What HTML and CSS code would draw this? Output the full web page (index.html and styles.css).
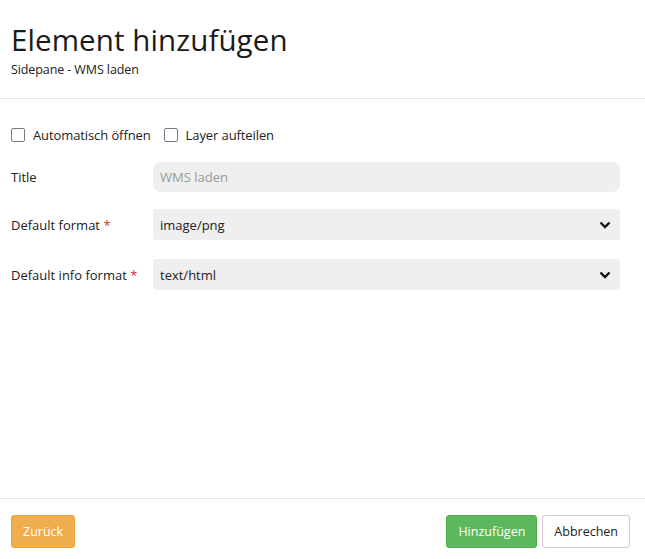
FILE: index.html
```html
<!DOCTYPE html>
<html lang="de">
<head>
<meta charset="utf-8">
<link rel="stylesheet" href="styles.css">
</head>
<body>
<div class="dialog">
  <header class="head">
    <h1 class="title">Element hinzufügen</h1>
    <div class="subtitle">Sidepane - WMS laden</div>
  </header>
  <main class="body">
    <div class="checks">
      <label class="check"><span class="box"></span>Automatisch öffnen</label>
      <label class="check"><span class="box"></span>Layer aufteilen</label>
    </div>
    <div class="row">
      <div class="label">Title</div>
      <div class="input placeholder">WMS laden</div>
    </div>
    <div class="row">
      <div class="label">Default format <span class="req">*</span></div>
      <div class="select">image/png
        <svg class="chev" viewBox="0 0 12 8" width="12" height="8"><path d="M1.5 1.5 L6 6 L10.5 1.5" fill="none" stroke="#111" stroke-width="2.4"/></svg>
      </div>
    </div>
    <div class="row">
      <div class="label">Default info format <span class="req">*</span></div>
      <div class="select">text/html
        <svg class="chev" viewBox="0 0 12 8" width="12" height="8"><path d="M1.5 1.5 L6 6 L10.5 1.5" fill="none" stroke="#111" stroke-width="2.4"/></svg>
      </div>
    </div>
  </main>
  <footer class="foot">
    <button class="btn btn-warn">Zurück</button>
    <div class="right">
      <button class="btn btn-ok">Hinzufügen</button>
      <button class="btn btn-def">Abbrechen</button>
    </div>
  </footer>
</div>
</body>
</html>
```

FILE: styles.css
```css
* { box-sizing: border-box; }
html, body { margin: 0; padding: 0; background: #fff; }
body { font-family: "Open Sans", "Noto Sans", sans-serif; color: #222; font-size: 13px; }
.dialog { width: 645px; height: 559px; display: flex; flex-direction: column; }
.head { padding: 22px 11px 0; height: 99px; border-bottom: 1px solid #e3e3e3; }
.title { margin: 0; font-weight: 400; font-size: 29.5px; line-height: 36px; color: #1a1a1a; letter-spacing: 0.1px; }
.subtitle { font-size: 12.5px; margin-top: 3px; color: #222; letter-spacing: -0.1px; }
.body { flex: 1; padding: 28px 25px 0 11px; }
.checks { display: flex; gap: 13px; height: 16px; align-items: center; margin-bottom: 19px; }
.check { display: flex; align-items: center; gap: 8px; font-size: 13px; letter-spacing: -0.1px; }
.box { width: 14px; height: 14px; border: 1.6px solid #777788; border-radius: 2px; display: inline-block; }
.row { display: flex; align-items: center; margin-bottom: 17px; }
.row + .row { margin-bottom: 19px; }
.label { width: 142px; font-size: 13px; }
.req { color: #c9302c; }
.input, .select { flex: 1; height: 30px; background: #efefef; display: flex; align-items: center; padding: 0 7px; font-size: 13px; }
.input { border-radius: 8px; }
.select { border-radius: 3px; height: 31px; justify-content: space-between; }
.placeholder { color: #999; }
.chev { margin-right: 2px; }
.foot { height: 61px; border-top: 1px solid #e3e3e3; display: flex; justify-content: space-between; align-items: flex-start; padding: 16px 15px 0 11px; }
.right { display: flex; gap: 5px; }
.btn { font-family: inherit; font-size: 12.5px; height: 33px; border-radius: 3px; padding: 0 11px; border: 1px solid transparent; }
.btn-warn { background: #f0ad4e; border-color: #eea236; color: #fff; }
.btn-ok { background: #5cb85c; border-color: #4cae4c; color: #fff; }
.btn-def { background: #fff; border-color: #ccc; color: #222; }
```
